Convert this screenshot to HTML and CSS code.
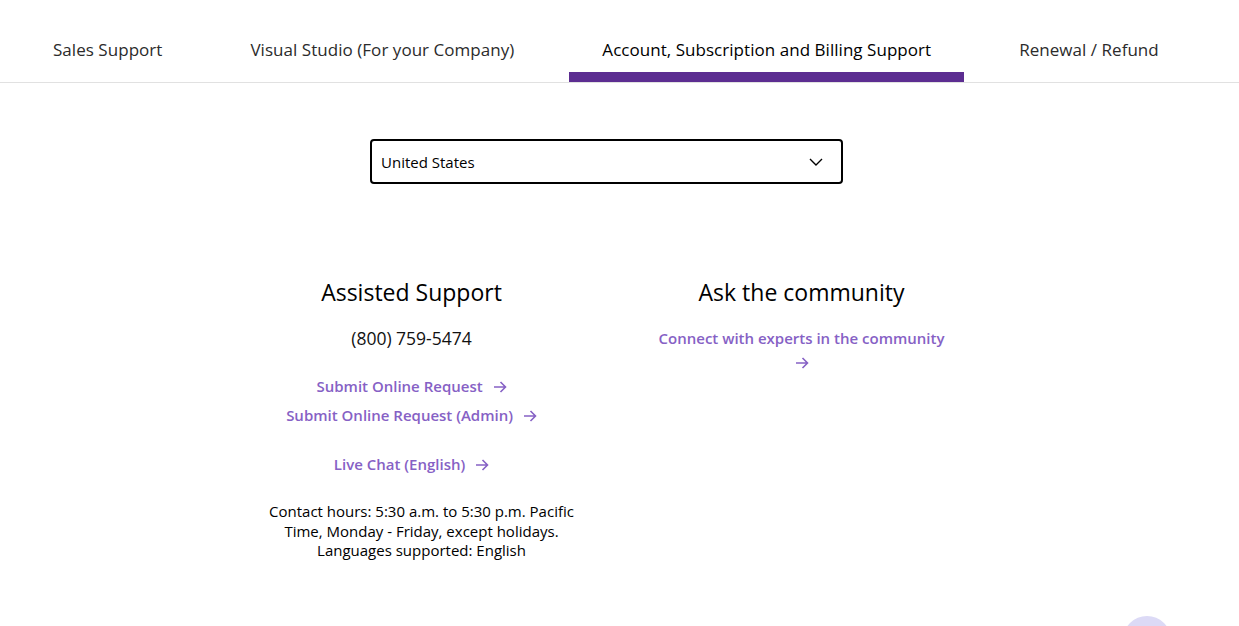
FILE: index.html
```html
<!DOCTYPE html>
<html lang="en">
<head>
<meta charset="utf-8">
<title>Support</title>
<link rel="stylesheet" href="styles.css">
</head>
<body>
<nav class="tabs">
  <a class="tab">Sales Support</a>
  <a class="tab">Visual Studio (For your Company)</a>
  <a class="tab active">Account, Subscription and Billing Support</a>
  <a class="tab">Renewal / Refund</a>
</nav>
<main class="main">
  <div class="select">
    <span>United States</span>
    <svg class="chev" width="14" height="8" viewBox="0 0 14 8"><path d="M1 1 L7 7 L13 1" fill="none" stroke="#000" stroke-width="1.4"/></svg>
  </div>
  <div class="cols">
    <section class="col">
      <h2 class="title">Assisted Support</h2>
      <p class="phone">(800) 759-5474</p>
      <div class="links">
        <a class="link">Submit Online Request <svg class="arrow" width="14" height="12" viewBox="0 0 14 12"><path d="M1 6 H12.5 M7.5 1 L12.5 6 L7.5 11" fill="none" stroke="currentColor" stroke-width="1.6"/></svg></a>
        <a class="link">Submit Online Request (Admin) <svg class="arrow" width="14" height="12" viewBox="0 0 14 12"><path d="M1 6 H12.5 M7.5 1 L12.5 6 L7.5 11" fill="none" stroke="currentColor" stroke-width="1.6"/></svg></a>
      </div>
      <a class="link chat">Live Chat (English) <svg class="arrow" width="14" height="12" viewBox="0 0 14 12"><path d="M1 6 H12.5 M7.5 1 L12.5 6 L7.5 11" fill="none" stroke="currentColor" stroke-width="1.6"/></svg></a>
      <p class="hours">Contact hours: 5:30 a.m. to 5:30 p.m. Pacific Time, Monday - Friday, except holidays.<br>Languages supported: English</p>
    </section>
    <section class="col">
      <h2 class="title">Ask the community</h2>
      <a class="link community">Connect with experts in the community<br><svg class="arrow" width="14" height="12" viewBox="0 0 14 12"><path d="M1 6 H12.5 M7.5 1 L12.5 6 L7.5 11" fill="none" stroke="currentColor" stroke-width="1.6"/></svg></a>
    </section>
  </div>
</main>
<div class="fab"></div>
</body>
</html>
```
FILE: styles.css
```css
html, body {
  margin: 0;
  padding: 0;
  background: #fff;
  overflow: hidden;
  height: 626px;
}
body {
  font-family: "Open Sans", "Noto Sans", sans-serif;
  color: #000;
  position: relative;
}
.tabs {
  display: flex;
  gap: 22px;
  padding-left: 20px;
  border-bottom: 1px solid #e1e1e1;
}
.tab {
  padding: 38px 33px 10px;
  border-bottom: 10px solid transparent;
  font-size: 17px;
  letter-spacing: 0.04px;
  line-height: 24px;
  color: #2b2b2b;
  white-space: nowrap;
}
.tab.active {
  border-bottom-color: #5c2d91;
  color: #000;
}
.main {
  width: 1213px;
  display: flex;
  flex-direction: column;
  align-items: center;
}
.select {
  margin-top: 56px;
  width: 473px;
  height: 45px;
  box-sizing: border-box;
  border: 2px solid #000;
  border-radius: 4px;
  display: flex;
  align-items: center;
  justify-content: space-between;
  padding: 0 18px 0 9px;
  font-size: 15px;
}
.chev { display: block; }
.cols {
  margin-top: 92px;
  display: grid;
  grid-template-columns: 370px 370px;
  gap: 20px;
}
.col {
  display: flex;
  flex-direction: column;
  align-items: center;
  text-align: center;
}
.title {
  margin: 0;
  font-size: 23px;
  font-weight: 400;
  line-height: 32px;
}
.phone {
  margin: 18px 0 0;
  font-size: 17.5px;
  font-weight: 500;
  line-height: 24px;
  color: #111;
}
.links {
  margin-top: 24px;
  display: flex;
  flex-direction: column;
  align-items: center;
  gap: 5px;
}
.link {
  color: #8661c5;
  font-size: 15px;
  font-weight: 600;
  line-height: 24px;
  white-space: nowrap;
}
.arrow {
  margin-left: 6px;
  vertical-align: -1px;
}
.chat { margin-top: 25px; }
.hours {
  margin: 26px 0 0 20px;
  width: 330px;
  font-size: 15px;
  line-height: 19.5px;
}
.community {
  margin-top: 18px;
  white-space: normal;
}
.community .arrow { margin-left: 0; }
.fab {
  position: absolute;
  left: 1123px;
  top: 616px;
  width: 48px;
  height: 48px;
  border-radius: 50%;
  background: #dcdaf6;
}
```
